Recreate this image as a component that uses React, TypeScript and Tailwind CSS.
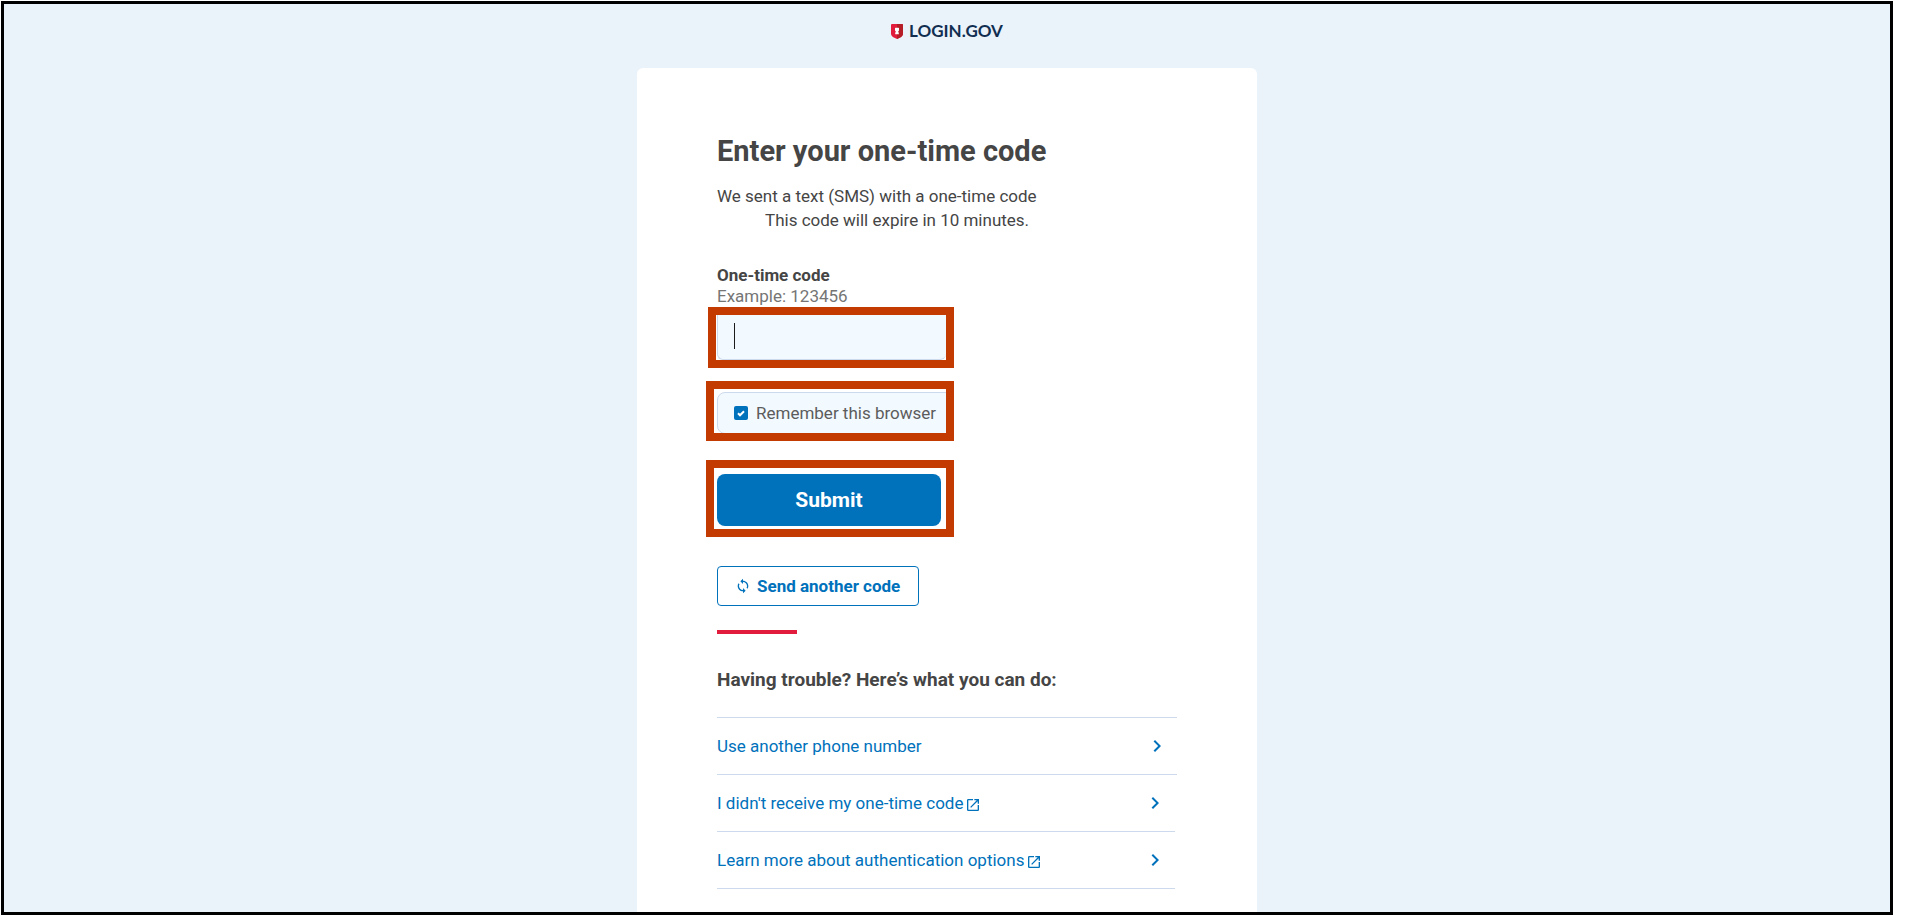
import { MdLaunch, MdLoop, MdNavigateNext } from "react-icons/md";

const EXTERNAL_LINKS = [
  { id: "not-received", label: "I didn't receive my one-time code" },
  { id: "learn-more", label: "Learn more about authentication options" },
];

function Logo() {
  return (
    <a href="#home" className="flex items-center gap-1.5 text-[#112e51]">
      <svg viewBox="0 0 12 15" className="h-[15px] w-3" aria-hidden="true">
        <path d="M1 0h10a1 1 0 0 1 1 1v8.6c0 3-3.2 4.4-6 5.4-2.8-1-6-2.4-6-5.4V1a1 1 0 0 1 1-1z" fill="#e21c3d" />
        <path d="M6 0h5a1 1 0 0 1 1 1v8.6c0 3-3.2 4.4-6 5.4z" fill="#b51d27" />
        <path d="M4.5 3.7h3l.5.5v2.3l-.8.9v.7l.6.7v1.5H4.2V8.8l.6-.7v-.7L4 6.5V4.2z" fill="#fff" />
      </svg>
      <span className="font-['Lato','Liberation_Sans',sans-serif] text-[17px] leading-5 font-bold">LOGIN.GOV</span>
    </a>
  );
}

export default function App() {
  return (
    <div className="min-h-screen bg-white pt-px pr-[26px] pb-1.5 pl-px font-['Roboto','Liberation_Sans',sans-serif] text-[17px] leading-6 text-[#454545]">
      <div className="flex min-h-[calc(100vh-7px)] flex-col items-center border-3 border-black bg-[#eaf2fa]">
        <header className="flex h-16 items-start pt-[17px]">
          <Logo />
        </header>

        <main className="w-full max-w-[620px] grow rounded-t-md bg-white px-20 pt-[63px]">
          <h1 className="text-[29px] leading-10 font-bold">Enter your one-time code</h1>
          <p className="mt-[13px]">We sent a text (SMS) with a one-time code</p>
          <p className="pl-12">This code will expire in 10 minutes.</p>

          <form onSubmit={(event) => event.preventDefault()}>
            <label htmlFor="code" className="mt-8 block leading-[22px] font-bold">
              One-time code
            </label>
            <p id="code-hint" className="leading-[21px] text-[#757575]">Example: 123456</p>
            <div className="relative -ml-[9px] w-[246px] border-8 border-[#c33b00] pl-px">
              <input
                id="code"
                type="text"
                inputMode="numeric"
                aria-describedby="code-hint"
                className="block h-[45px] w-full rounded-b-md border-b border-l border-[#cdd9ec] bg-[#f2f9ff] px-4 outline-none"
              />
              <span className="absolute top-2 left-[18px] h-[26px] w-px bg-[#1b1b1b]" />
            </div>

            <div className="mt-[13px] -ml-[11px] h-[60px] w-[248px] overflow-hidden border-8 border-[#c33b00] pt-[3px] pl-[3px]">
              <label className="flex h-[42px] w-60 items-center gap-2 rounded-lg border border-[#cdd9ec] bg-[#f2f9ff] pl-4 text-[#5c5c5c]">
                <input type="checkbox" defaultChecked className="peer sr-only" />
                <span className="flex size-3.5 shrink-0 items-center justify-center rounded-xs bg-[#0071bb]">
                  <svg viewBox="0 0 8 7" className="h-[7px] w-2" fill="none" stroke="#fff" strokeWidth="2" aria-hidden="true">
                    <path d="M1 3.3 3 5.3 7 1.2" />
                  </svg>
                </span>
                Remember this browser
              </label>
            </div>

            <div className="mt-[19px] -ml-[11px] w-[248px] border-8 border-[#c33b00] pt-1.5 pr-[5px] pb-[3px] pl-[3px]">
              <button type="submit" className="block h-[52px] w-full rounded-lg bg-[#0071bb] text-[21px] leading-6 font-bold text-white">
                Submit
              </button>
            </div>

            <button
              type="button"
              className="mt-[29px] flex h-10 w-[202px] items-center gap-1.5 rounded border border-[#0071bb] pl-[17px] font-bold text-[#0071bb]"
            >
              <MdLoop className="size-4 shrink-0" />
              Send another code
            </button>
          </form>

          <div className="mt-6 h-1 w-20 bg-[#e21c3d]" />

          <section>
            <h2 className="mt-8 text-[19px] leading-7 font-bold">Having trouble? Here’s what you can do:</h2>
            <div className="mt-[23px] border-y border-[#cdd9ec]">
              <a href="#phone" className="flex h-14 items-center justify-between pr-2 text-[#0071bb]">
                Use another phone number
                <MdNavigateNext className="size-6" />
              </a>
            </div>
            <ul className="mr-0.5">
              {EXTERNAL_LINKS.map((link) => (
                <li key={link.id} className="border-b border-[#cdd9ec]">
                  <a href={`#${link.id}`} className="flex h-14 items-center justify-between pr-2 text-[#0071bb]">
                    <span className="flex items-center gap-0.5">
                      {link.label}
                      <MdLaunch className="mt-1 size-4" />
                    </span>
                    <MdNavigateNext className="size-6" />
                  </a>
                </li>
              ))}
            </ul>
          </section>
        </main>
      </div>
    </div>
  );
}
